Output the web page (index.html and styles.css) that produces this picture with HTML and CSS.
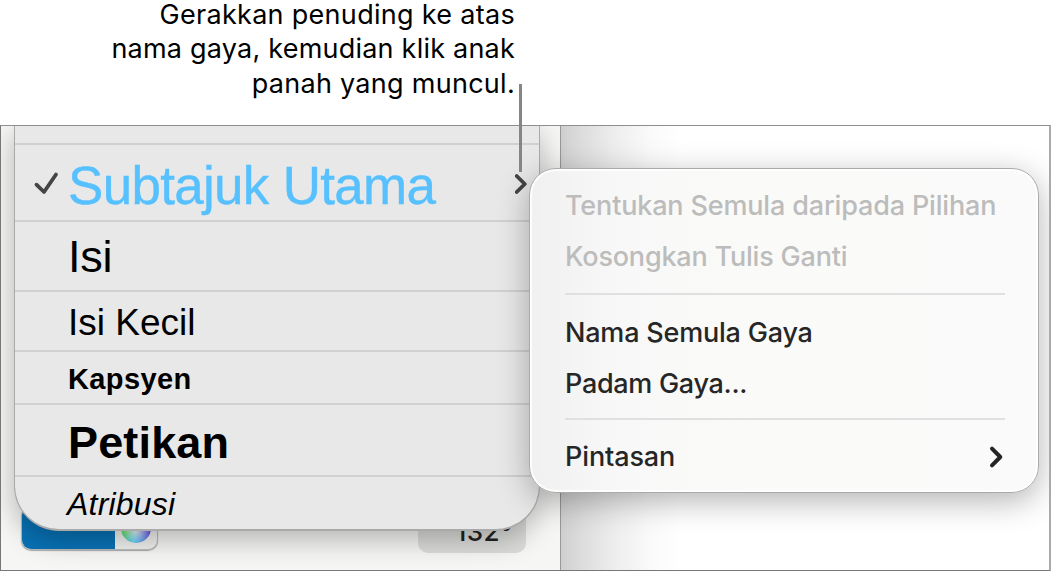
FILE: index.html
```html
<!DOCTYPE html>
<html lang="ms">
<head>
<meta charset="utf-8">
<title>Gaya perenggan</title>
<link rel="stylesheet" href="styles.css">
</head>
<body>
<div class="figure">
  <div class="caption">
    <div class="cap1">Gerakkan penuding ke atas</div>
    <div class="cap2">nama gaya, kemudian klik anak</div>
    <div class="cap3">panah yang muncul.</div>
  </div>
  <div class="frame">
    <div class="sidebar">
      <div class="controls">
        <div class="swatch"><div class="fill"></div><div class="well"><div class="wheel"></div></div></div>
        <div class="angle">132°</div>
      </div>
    </div>
    <div class="canvas"></div>
    <div class="styles">
      <div class="row stub"></div>
      <div class="row title">
        <svg class="check" width="26" height="26" viewBox="0 0 26 26"><path d="M3.5 14.7 11 22 23 4.5" /></svg>
        <span class="name">Subtajuk Utama</span>
        <svg class="arrow" width="16" height="22" viewBox="0 0 16 22"><path d="M1.7 4 9.8 12 1.7 20" /></svg>
      </div>
      <div class="row body"><span class="name">Isi</span></div>
      <div class="row small"><span class="name">Isi Kecil</span></div>
      <div class="row kap"><span class="name">Kapsyen</span></div>
      <div class="row quote"><span class="name">Petikan</span></div>
      <div class="row attr"><span class="name">Atribusi</span></div>
    </div>
    <div class="menu">
      <div class="item off"><span class="m1">Tentukan Semula daripada Pilihan</span></div>
      <div class="item off"><span class="m2">Kosongkan Tulis Ganti</span></div>
      <div class="sep"></div>
      <div class="item"><span class="m3">Nama Semula Gaya</span></div>
      <div class="item"><span class="m4">Padam Gaya...</span></div>
      <div class="sep low"></div>
      <div class="item"><span class="m5">Pintasan</span>
        <svg class="more" width="16" height="24" viewBox="0 0 16 24"><path d="M3 3.7 11.3 12 3 20.3" /></svg>
      </div>
    </div>
  </div>
  <div class="pointer"></div>
</div>
</body>
</html>
```
FILE: styles.css
```css
* { box-sizing: border-box; }
body { margin: 0; background: #fff; font-family: Inter, sans-serif; color: #000; }
.figure { position: relative; width: 1051px; height: 572px; overflow: hidden; display: flex; flex-direction: column; }
.caption { width: 515px; height: 125px; flex: none; text-align: right; font-size: 27px; line-height: 34.7px; white-space: nowrap; }
.caption div { height: 34.7px; }
.caption .cap1 { height: 32.4px; line-height: 30px; }
.cap1 { letter-spacing: .3px; }
.cap2 { letter-spacing: .22px; }
.cap3 { letter-spacing: .28px; }
.frame { position: relative; width: 1051px; height: 446px; border: 1px solid #77777a; border-right: 2px solid #aaa; border-top-color: #8e8e90; overflow: hidden; display: flex; background: #fff; }
.sidebar { width: 560px; height: 100%; flex: none; background: #f6f6f4; border-right: 1px solid #999; display: flex; align-items: flex-end; }
.canvas { flex: 1; background: linear-gradient(90deg, #cfcfcf 0, #dcdcdc 20px, #eee 55px, #fafafa 90px, #fff 120px); }
.controls { display: flex; justify-content: space-between; align-items: flex-end; width: 525px; margin-left: 20px; padding-right: 20px; height: 80px; padding-bottom: 17px; }
.swatch { width: 137px; height: 44px; border-radius: 10px; display: flex; overflow: hidden; background: #f1f1f0; border: 1px solid #bbb; box-shadow: 0 1px 1px #aaa; margin-bottom: 3px; }
.fill { width: 93px; background: #0872b5; }
.well { flex: 1; display: flex; justify-content: center; align-items: flex-end; padding-bottom: 6px; }
.wheel { width: 30px; height: 30px; border-radius: 50%; background: radial-gradient(circle, #fff 0, #ffffff00 85%), conic-gradient(#e33, #d3e 70deg, #43d 110deg, #48e 150deg, #4cf 190deg, #3d4 250deg, #dd3 310deg, #e33); }
.angle { width: 108px; height: 46px; background: #dcdcdb; border-radius: 10px; text-align: center; font-size: 26px; font-weight: 500; line-height: 30px; padding-left: 24px; padding-top: 10px; letter-spacing: .5px; color: #222; }
.styles { position: absolute; left: 13px; top: -1px; width: 526px; height: 406px; background: #e8e8e8; border: 1px solid #aaa; border-bottom: 2px solid #aaa; border-radius: 0 0 45px 45px; box-shadow: 0 9px 28px rgba(0,0,0,.27); display: flex; flex-direction: column; overflow: hidden; font-family: "Liberation Sans", Arial, sans-serif; }
.row { flex: none; display: flex; align-items: center; border-bottom: 2px solid #d0d0d0; padding-left: 53px; white-space: nowrap; }
.name { display: block; line-height: 1; }
.stub { height: 19px; }
.title { height: 77px; padding-left: 18px; padding-right: 8px; font-size: 53px; letter-spacing: -.7px; color: #57c0ff; }
.title .name { padding-top: 5px; margin-left: 9px; flex: 1; -webkit-text-stroke: .4px #57c0ff; }
.check path, .arrow path, .more path { fill: none; stroke: #454545; stroke-width: 3.8; stroke-linecap: round; stroke-linejoin: round; }
.check { flex: none; }
.arrow { flex: none; }
.body { height: 70px; font-size: 45px; letter-spacing: -.3px; }
.small { height: 60px; font-size: 37px; padding-top: 2px; }
.kap { height: 53px; font-size: 29px; letter-spacing: .4px; font-weight: 700; padding-top: 3px; }
.quote { height: 72px; font-size: 45px; letter-spacing: .15px; font-weight: 700; padding-top: 4px; }
.attr { height: 53px; font-size: 32px; letter-spacing: .2px; font-style: italic; border-bottom: 0; padding-left: 52px; }
.menu { position: absolute; left: 528px; top: 42px; width: 510px; height: 325px; border: 1px solid #aaa; border-radius: 27px; background: linear-gradient(90deg, #f0f0f0, #f8f8f8 90px, #fafaf8 220px, #fafafb); box-shadow: 0 8px 32px rgba(0,0,0,.3), inset 0 0 1px 2px rgba(255,255,255,.9); padding: 11px 33px 12px 35px; display: flex; flex-direction: column; color: #262626; font-size: 27px; font-weight: 500; }
.item { height: 51px; flex: none; display: flex; align-items: center; justify-content: space-between; white-space: nowrap; line-height: 32px; }
.off { color: #bcbcbc; }
.m1 { letter-spacing: -.16px; }
.m2, .m3 { letter-spacing: -.2px; }
.m4 { letter-spacing: -.3px; }
.m5 { letter-spacing: -.12px; }
.sep { height: 2px; background: #e0e0e0; flex: none; margin: 11px 0 12px; }
.low { margin: 9px 0 11px; }
.more path { stroke: #242424; stroke-width: 4; }
.pointer { position: absolute; left: 519px; top: 84px; width: 2.5px; height: 88px; background: #858585; }
```
